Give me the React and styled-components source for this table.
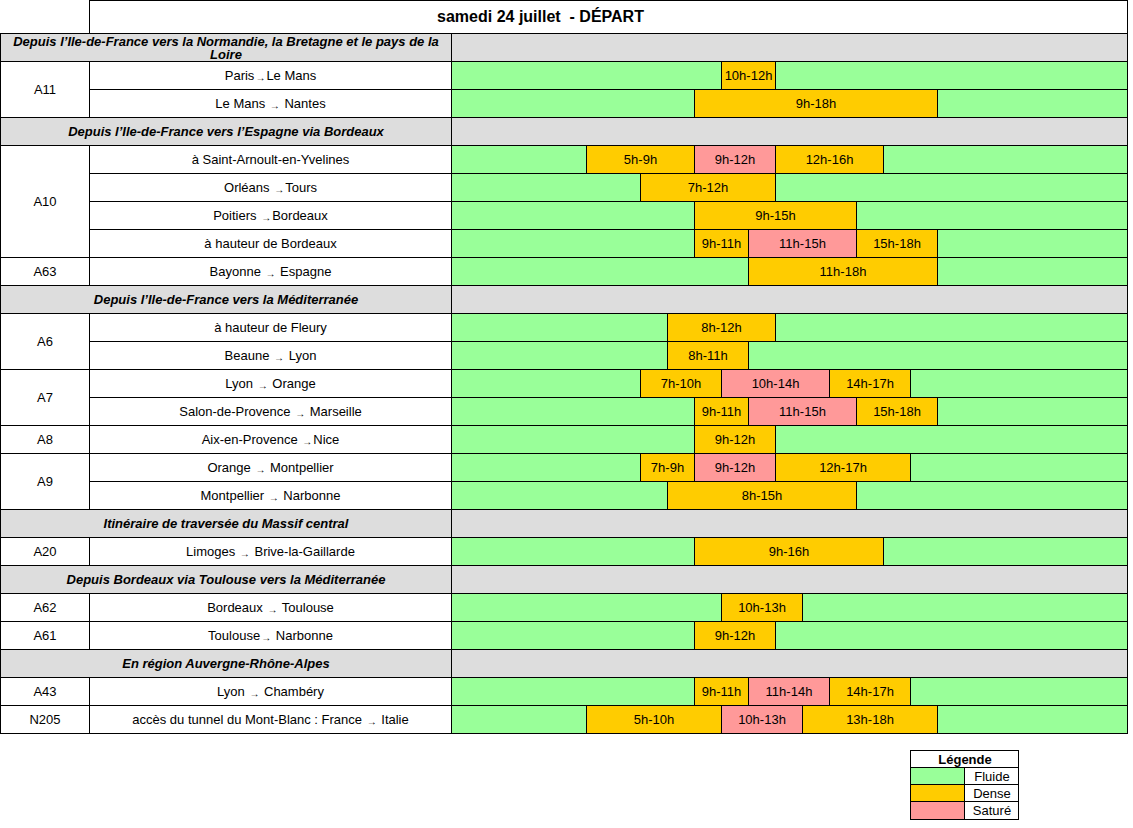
import React from "react"
import styled, { createGlobalStyle } from "styled-components"

const HOUR = 27

const colors = {
  fluide: "#99ff99",
  dense: "#ffcc00",
  sature: "#ff9999",
  gray: "#dddddd",
}

const GlobalStyle = createGlobalStyle`
  body {
    margin: 0;
    background: #fff;
    font-family: "Liberation Sans", Arial, sans-serif;
    color: #000;
  }
`

const Page = styled.div`
  width: 1133px;
`

const Grid = styled.div`
  display: grid;
  grid-template-columns: 90px 362px 676px;
  grid-template-rows: 34px;
  grid-auto-rows: 28px;
  width: 1128px;
`

const Corner = styled.div`
  border-right: 1px solid #000;
  border-bottom: 1px solid #000;
`

const Title = styled.div`
  grid-column: 2 / 4;
  border-top: 1px solid #000;
  border-right: 1px solid #000;
  border-bottom: 1px solid #000;
  display: flex;
  align-items: center;
  justify-content: center;
  padding-right: 136px;
  font-size: 16px;
  font-weight: bold;
  white-space: pre;
`

const Section = styled.div`
  grid-column: 1 / 3;
  background: ${colors.gray};
  border-left: 1px solid #000;
  border-right: 1px solid #000;
  border-bottom: 1px solid #000;
  display: flex;
  align-items: center;
  justify-content: center;
  text-align: center;
  padding: 0 6px;
  font-size: 13px;
  font-weight: bold;
  font-style: italic;
  line-height: 13px;
`

const SectionFill = styled.div`
  background: ${colors.gray};
  border-right: 1px solid #000;
  border-bottom: 1px solid #000;
`

const Road = styled.div`
  grid-row: span ${(p) => p.$span};
  border-left: 1px solid #000;
  border-right: 1px solid #000;
  border-bottom: 1px solid #000;
  display: flex;
  align-items: center;
  justify-content: center;
  font-size: 13px;
`

const Route = styled.div`
  border-right: 1px solid #000;
  border-bottom: 1px solid #000;
  display: flex;
  align-items: center;
  justify-content: center;
  font-size: 13px;
  white-space: pre;
`

const Arrow = styled.span`
  font-size: 10px;
  position: relative;
  top: 2px;
  margin: 0 1px;
`

const Timeline = styled.div`
  display: flex;
  background: ${colors.fluide};
  border-right: 1px solid #000;
  border-bottom: 1px solid #000;
`

const Spacer = styled.div`
  flex: none;
`

const Slot = styled.div`
  flex: none;
  box-sizing: border-box;
  background: ${(p) => colors[p.$level]};
  border-right: 1px solid #000;
  border-left: ${(p) => (p.$first ? "1px solid #000" : "none")};
  display: flex;
  align-items: center;
  justify-content: center;
  font-size: 13px;
`

const Legend = styled.div`
  display: grid;
  grid-template-columns: 54px 54px;
  grid-template-rows: 17px;
  grid-auto-rows: 17px;
  width: 109px;
  margin: 16px 0 0 910px;
  box-sizing: border-box;
  border: 1px solid #000;
  font-size: 13px;
`

const LegendHead = styled.div`
  grid-column: 1 / 3;
  border-bottom: 1px solid #000;
  display: flex;
  align-items: center;
  justify-content: center;
  font-weight: bold;
`

const Swatch = styled.div`
  background: ${(p) => colors[p.$level]};
  border-right: 1px solid #000;
  border-bottom: ${(p) => (p.$last ? "none" : "1px solid #000")};
`

const LegendText = styled.div`
  border-bottom: ${(p) => (p.$last ? "none" : "1px solid #000")};
  display: flex;
  align-items: center;
  justify-content: center;
`

const data = [
  {
    title: "Depuis l’Ile-de-France vers la Normandie, la Bretagne et le pays de la Loire",
    roads: [
      {
        name: "A11",
        routes: [
          { label: "Paris→Le Mans", slots: [[10, 12, "dense"]] },
          { label: "Le Mans → Nantes", slots: [[9, 18, "dense"]] },
        ],
      },
    ],
  },
  {
    title: "Depuis l’Ile-de-France vers l’Espagne via Bordeaux",
    roads: [
      {
        name: "A10",
        routes: [
          {
            label: "à Saint-Arnoult-en-Yvelines",
            slots: [[5, 9, "dense"], [9, 12, "sature"], [12, 16, "dense"]],
          },
          { label: "Orléans →Tours", slots: [[7, 12, "dense"]] },
          { label: "Poitiers →Bordeaux", slots: [[9, 15, "dense"]] },
          {
            label: "à hauteur de Bordeaux",
            slots: [[9, 11, "dense"], [11, 15, "sature"], [15, 18, "dense"]],
          },
        ],
      },
      {
        name: "A63",
        routes: [{ label: "Bayonne → Espagne", slots: [[11, 18, "dense"]] }],
      },
    ],
  },
  {
    title: "Depuis l’Ile-de-France vers la Méditerranée",
    roads: [
      {
        name: "A6",
        routes: [
          { label: "à hauteur de Fleury", slots: [[8, 12, "dense"]] },
          { label: "Beaune → Lyon", slots: [[8, 11, "dense"]] },
        ],
      },
      {
        name: "A7",
        routes: [
          {
            label: "Lyon → Orange",
            slots: [[7, 10, "dense"], [10, 14, "sature"], [14, 17, "dense"]],
          },
          {
            label: "Salon-de-Provence → Marseille",
            slots: [[9, 11, "dense"], [11, 15, "sature"], [15, 18, "dense"]],
          },
        ],
      },
      {
        name: "A8",
        routes: [{ label: "Aix-en-Provence →Nice", slots: [[9, 12, "dense"]] }],
      },
      {
        name: "A9",
        routes: [
          {
            label: "Orange → Montpellier",
            slots: [[7, 9, "dense"], [9, 12, "sature"], [12, 17, "dense"]],
          },
          { label: "Montpellier → Narbonne", slots: [[8, 15, "dense"]] },
        ],
      },
    ],
  },
  {
    title: "Itinéraire de traversée du Massif central",
    roads: [
      {
        name: "A20",
        routes: [{ label: "Limoges → Brive-la-Gaillarde", slots: [[9, 16, "dense"]] }],
      },
    ],
  },
  {
    title: "Depuis Bordeaux via Toulouse vers la Méditerranée",
    roads: [
      {
        name: "A62",
        routes: [{ label: "Bordeaux → Toulouse", slots: [[10, 13, "dense"]] }],
      },
      {
        name: "A61",
        routes: [{ label: "Toulouse→ Narbonne", slots: [[9, 12, "dense"]] }],
      },
    ],
  },
  {
    title: "En région Auvergne-Rhône-Alpes",
    roads: [
      {
        name: "A43",
        routes: [
          {
            label: "Lyon → Chambéry",
            slots: [[9, 11, "dense"], [11, 14, "sature"], [14, 17, "dense"]],
          },
        ],
      },
      {
        name: "N205",
        routes: [
          {
            label: "accès du tunnel du Mont-Blanc : France → Italie",
            slots: [[5, 10, "dense"], [10, 13, "sature"], [13, 18, "dense"]],
          },
        ],
      },
    ],
  },
]

const RouteLabel = ({ text }) => {
  const parts = text.split("→")
  return (
    <Route>
      {parts.map((part, i) => (
        <React.Fragment key={i}>
          {i > 0 && <Arrow>→</Arrow>}
          {part}
        </React.Fragment>
      ))}
    </Route>
  )
}

const Bar = ({ slots }) => (
  <Timeline>
    <Spacer style={{ width: slots[0][0] * HOUR - 1 }} />
    {slots.map(([from, to, level], i) => (
      <Slot
        key={i}
        $level={level}
        $first={i === 0}
        style={{ width: (to - from) * HOUR + (i === 0 ? 1 : 0) }}
      >
        {from}h-{to}h
      </Slot>
    ))}
  </Timeline>
)

const App = () => {
  return (
    <Page>
      <GlobalStyle />
      <Grid>
        <Corner />
        <Title>samedi 24 juillet  - DÉPART</Title>
        {data.map((section) => (
          <React.Fragment key={section.title}>
            <Section>{section.title}</Section>
            <SectionFill />
            {section.roads.map((road) =>
              road.routes.map((route, i) => (
                <React.Fragment key={road.name + i}>
                  {i === 0 && <Road $span={road.routes.length}>{road.name}</Road>}
                  <RouteLabel text={route.label} />
                  <Bar slots={route.slots} />
                </React.Fragment>
              ))
            )}
          </React.Fragment>
        ))}
      </Grid>
      <Legend>
        <LegendHead>Légende</LegendHead>
        <Swatch $level="fluide" />
        <LegendText>Fluide</LegendText>
        <Swatch $level="dense" />
        <LegendText>Dense</LegendText>
        <Swatch $level="sature" $last />
        <LegendText $last>Saturé</LegendText>
      </Legend>
    </Page>
  )
}

export default App
